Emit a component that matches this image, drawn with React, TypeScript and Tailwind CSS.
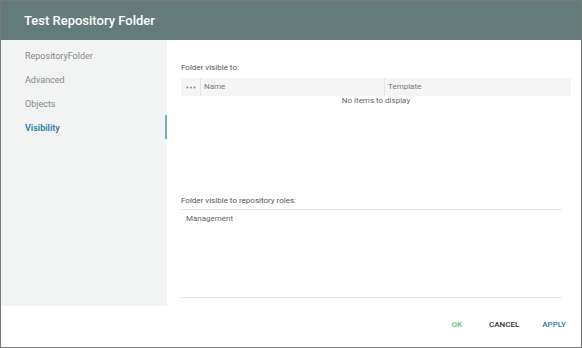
import React from "react";

const NAV = ["RepositoryFolder", "Advanced", "Objects", "Visibility"];

function Dots() {
  return (
    <svg width="10" height="3" viewBox="0 0 10 3" className="fill-[#8a8a8a]">
      <circle cx="1.5" cy="1.5" r="1" />
      <circle cx="5" cy="1.5" r="1" />
      <circle cx="8.5" cy="1.5" r="1" />
    </svg>
  );
}

export default function App() {
  return (
    <div
      className="flex h-[348px] w-[582px] flex-col border border-[#7a7a7a] bg-white"
      style={{ fontFamily: "Roboto, 'Liberation Sans', sans-serif" }}
    >
      {/* Title bar */}
      <div className="flex h-[39px] shrink-0 items-center bg-[#647b7b] pl-[23px]">
        <h1 className="text-[13px] font-medium text-white">Test Repository Folder</h1>
      </div>

      <div className="flex h-[266px] shrink-0">
        {/* Sidebar */}
        <div className="w-[166px] shrink-0 bg-[#f2f3f3] pt-[3px]">
          {NAV.map((item) => {
            const active = item === "Visibility";
            return (
              <div
                key={item}
                className={
                  active
                    ? "flex h-[24px] items-center border-r-2 border-[#79adc6] pl-[24px] pt-[4px] text-[9px] font-semibold text-[#2d7aa6]"
                    : "flex h-[24px] items-center pl-[24px] pt-[4px] text-[9px] text-[#888]"
                }
              >
                {item}
              </div>
            );
          })}
        </div>

        {/* Content */}
        <div className="flex flex-1 flex-col pl-[14px] pr-[10px] pt-[22px]">
          <p className="text-[8px] leading-[12px] text-[#555]">Folder visible to:</p>
          <div className="mt-[4px] flex h-[18px] items-center bg-[#f5f5f5] text-[8px] text-[#777]">
            <span className="flex w-[19px] items-center pl-[5px]">
              <Dots />
            </span>
            <span className="h-full border-l border-[#e6e6e6]" />
            <span className="w-[183px] pl-[3px]">Name</span>
            <span className="h-full border-l border-[#e6e6e6]" />
            <span className="pl-[3px]">Template</span>
          </div>
          <p className="text-center text-[8px] leading-[10px] text-[#666]">No items to display</p>

          <p className="mt-[89px] pr-[9px] text-[8px] leading-[12px] text-[#555]">
            Folder visible to repository roles:
          </p>
          <div className="mr-[9px] mt-[2px] flex h-[89px] flex-col border-y border-[#e8e8e8] pl-[5px] pt-[3px]">
            <span className="text-[8px] leading-[12px] text-[#666]">Management</span>
          </div>
        </div>
      </div>

      {/* Footer */}
      <div className="flex flex-1 items-center justify-end pb-[3px] pr-[15px] text-[8px] font-medium">
        <button className="text-[#5fbf72]">OK</button>
        <button className="ml-[27px] text-[#333]">CANCEL</button>
        <button className="ml-[23px] text-[#2d7aa6]">APPLY</button>
      </div>
    </div>
  );
}
